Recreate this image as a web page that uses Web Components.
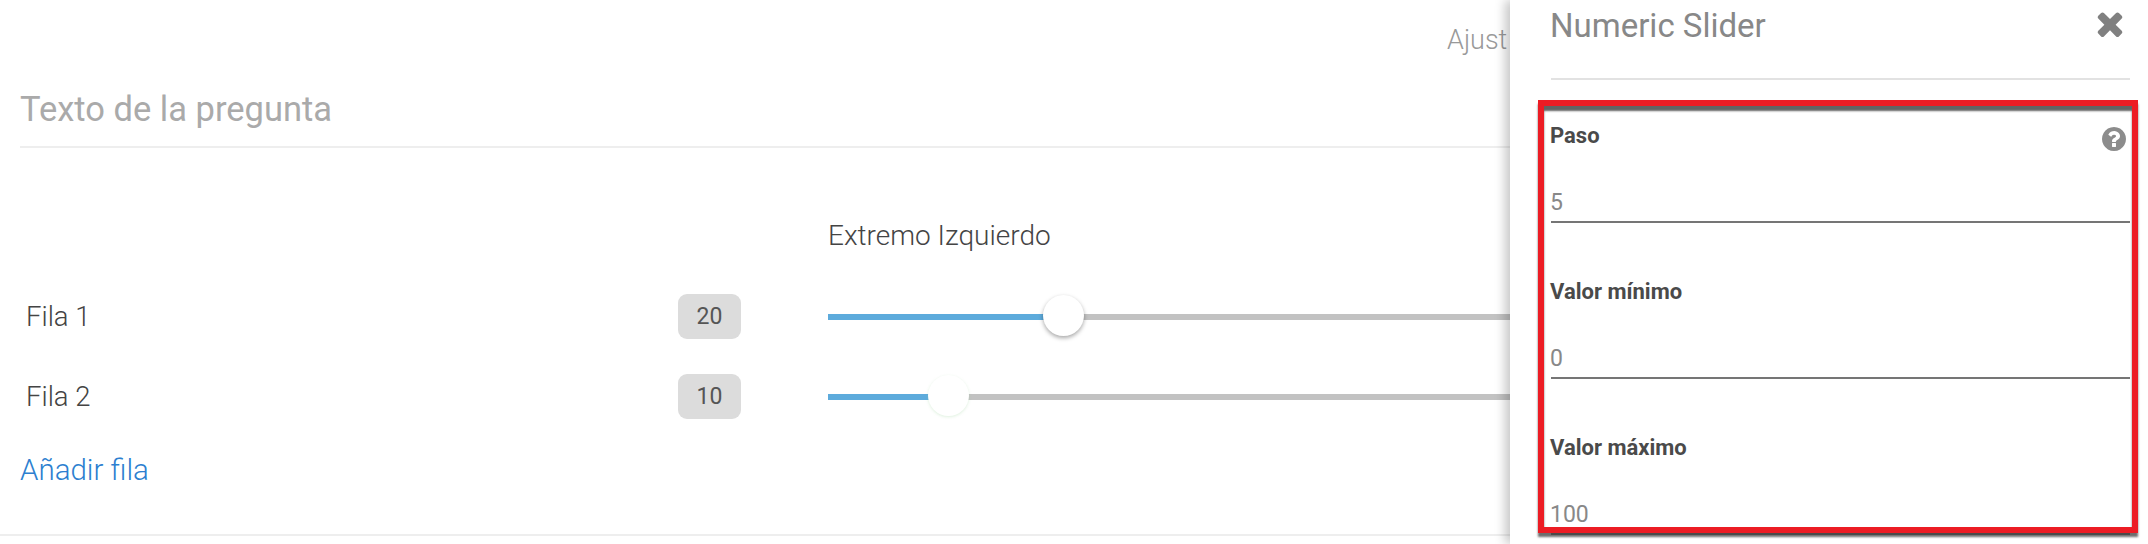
<!DOCTYPE html>
<html lang="es">
<head>
<meta charset="utf-8">
<title>Numeric Slider</title>
<style>
    html, body { margin: 0; background: #fff; }
    body { font-family: "Roboto", "Liberation Sans", sans-serif; font-weight: 300; color: #444; }
</style>
</head>
<body>
<survey-page>
    <settings-link>Ajust</settings-link>
    <question-title>Texto de la pregunta</question-title>
    <slider-head>Extremo Izquierdo</slider-head>
    <slider-row value="20" shadow="dark">Fila 1</slider-row>
    <slider-row value="10">Fila 2</slider-row>
    <add-link>Añadir fila</add-link>
    <side-panel slot="panel" heading="Numeric Slider">
        <number-field label="Paso" value="5" help></number-field>
        <number-field label="Valor mínimo" value="0"></number-field>
        <number-field label="Valor máximo" value="100"></number-field>
    </side-panel>
    <red-mark slot="panel"></red-mark>
</survey-page>

<script>
class SurveyPage extends HTMLElement {
    constructor() {
        super();
        this.attachShadow({mode: 'open'});
        this.shadowRoot.innerHTML = `
            <style>
                :host {
                    display: block;
                    position: relative;
                    width: 2148px;
                    height: 544px;
                    overflow: hidden;
                }
                #content {
                    display: flex;
                    flex-direction: column;
                    height: 534px;
                    border-bottom: 2px solid #eee;
                    box-sizing: content-box;
                }
            </style>
            <div id="content"><slot></slot></div>
            <slot name="panel"></slot>`;
    }
}

class SettingsLink extends HTMLElement {
    constructor() {
        super();
        this.attachShadow({mode: 'open'});
        this.shadowRoot.innerHTML = `
            <style>
                :host {
                    display: block;
                    height: 80px;
                    line-height: 80px;
                    padding-left: 1447px;
                    font-size: 27px;
                    color: #999;
                }
            </style>
            <slot></slot>`;
    }
}

class QuestionTitle extends HTMLElement {
    constructor() {
        super();
        this.attachShadow({mode: 'open'});
        this.shadowRoot.innerHTML = `
            <style>
                :host {
                    display: block;
                    margin-left: 20px;
                    height: 60px;
                    line-height: 59px;
                    padding-bottom: 6px;
                    border-bottom: 2px solid #eee;
                    font-size: 34.5px;
                    font-weight: 400;
                    color: #aaa;
                }
            </style>
            <slot></slot>`;
    }
}

class SliderHead extends HTMLElement {
    constructor() {
        super();
        this.attachShadow({mode: 'open'});
        this.shadowRoot.innerHTML = `
            <style>
                :host {
                    display: block;
                    margin-top: 48px;
                    height: 80px;
                    line-height: 80px;
                    padding-left: 828px;
                    font-size: 28px;
                    color: #444;
                }
            </style>
            <slot></slot>`;
    }
}

class SliderRow extends HTMLElement {
    constructor() {
        super();
        this.attachShadow({mode: 'open'});
    }

    connectedCallback() {
        const value = Number(this.getAttribute('value'));
        const dark = this.getAttribute('shadow') === 'dark';
        const left = 5 + value * 11.5;
        this.shadowRoot.innerHTML = `
            <style>
                :host {
                    display: grid;
                    grid-template-columns: 652px 63px 87px 1170px;
                    align-items: center;
                    height: 80px;
                    padding-left: 26px;
                    font-size: 27.5px;
                    color: #444;
                }
                #badge {
                    height: 45px;
                    line-height: 45px;
                    text-align: center;
                    background: #dcdcdc;
                    border-radius: 9px;
                    font-size: 23px;
                    font-weight: 400;
                    color: #555;
                }
                #track {
                    grid-column: 4;
                    position: relative;
                    height: 6px;
                    margin-top: 2px;
                    background: #c2c2c2;
                }
                #fill {
                    height: 100%;
                    width: ${left}px;
                    background: #5dabdc;
                }
                #thumb {
                    position: absolute;
                    top: -19px;
                    left: ${left - 20}px;
                    width: 41px;
                    height: 41px;
                    border-radius: 50%;
                    background: #fff;
                    box-shadow: ${dark ? '0 2px 4px rgba(0,0,0,.35)' : '0 1px 3px rgba(150,210,150,.3)'};
                }
            </style>
            <div><slot></slot></div>
            <div id="badge">${value}</div>
            <div id="track">
                <div id="fill"></div>
                <div id="thumb"></div>
            </div>`;
    }
}

class AddLink extends HTMLElement {
    constructor() {
        super();
        this.attachShadow({mode: 'open'});
        this.shadowRoot.innerHTML = `
            <style>
                :host {
                    display: block;
                    height: 68px;
                    line-height: 68px;
                    padding-left: 20px;
                    font-size: 29.5px;
                    color: #2d7fd0;
                }
            </style>
            <slot></slot>`;
    }
}

class SidePanel extends HTMLElement {
    constructor() {
        super();
        this.attachShadow({mode: 'open'});
    }

    connectedCallback() {
        this.shadowRoot.innerHTML = `
            <style>
                :host {
                    display: block;
                    position: absolute;
                    top: 0;
                    bottom: 0;
                    left: 1510px;
                    right: 0;
                    padding: 0 18px 0 41px;
                    background: #fff;
                    box-shadow: -5px 0 10px rgba(0,0,0,.22);
                    overflow: hidden;
                }
                #head {
                    display: flex;
                    justify-content: space-between;
                    align-items: flex-start;
                    height: 78px;
                    border-bottom: 2px solid #e2e2e2;
                    line-height: 51px;
                    font-size: 33px;
                    font-weight: 400;
                    color: #888;
                }
                #head span { margin-left: -1px; }
                #head svg {
                    width: 26px;
                    height: 26px;
                    margin: 11px 7px 0 0;
                    fill: #808080;
                }
                #fields { padding-top: 40px; }
            </style>
            <div id="head">
                <span>${this.getAttribute('heading')}</span>
                <svg viewBox="110 214 1188 1256"><path d="M1298 1238q0 40-28 68l-136 136q-28 28-68 28t-68-28l-294-294-294 294q-28 28-68 28t-68-28l-136-136q-28-28-28-68t28-68l294-294-294-294q-28-28-28-68t28-68l136-136q28-28 68-28t68 28l294 294 294-294q28-28 68-28t68 28l136 136q28 28 28 68t-28 68l-294 294 294 294q28 28 28 68z"/></svg>
            </div>
            <div id="fields"><slot></slot></div>`;
    }
}

class NumberField extends HTMLElement {
    constructor() {
        super();
        this.attachShadow({mode: 'open'});
    }

    connectedCallback() {
        const help = this.hasAttribute('help') ? `<svg viewBox="128 128 1536 1536"><path d="M1024 1376v-192q0-14-9-23t-23-9h-192q-14 0-23 9t-9 23v192q0 14 9 23t23 9h192q14 0 23-9t9-23zm256-672q0-88-55.5-163t-138.5-116-170-41q-243 0-371 213-15 24 8 42l132 100q7 6 19 6 16 0 25-12 53-68 86-92 34-24 86-24 48 0 85.5 26t37.5 59q0 38-20 61t-68 45q-63 28-115.5 86.5t-52.5 125.5v36q0 14 9 23t23 9h192q14 0 23-9t9-23q0-19 21.5-49.5t54.5-49.5q32-18 49-28.5t46-35 44.5-48 28-60.5 12.5-81zm384 192q0 209-103 385.5t-279.5 279.5-385.5 103-385.5-103-279.5-279.5-103-385.5 103-385.5 279.5-279.5 385.5-103 385.5 103 279.5 279.5 103 385.5z"/></svg>` : '';
        this.shadowRoot.innerHTML = `
            <style>
                :host {
                    display: block;
                    height: 156px;
                }
                #label {
                    display: flex;
                    justify-content: space-between;
                    align-items: flex-start;
                    height: 32px;
                    line-height: 32px;
                    margin-left: -1px;
                    font-size: 22px;
                    font-weight: 700;
                    color: #4a4a4a;
                }
                #label svg {
                    width: 24px;
                    height: 24px;
                    margin: 7px 4px 0 0;
                    fill: #8c8c8c;
                }
                #value {
                    margin-top: 34px;
                    height: 35px;
                    line-height: 34px;
                    border-bottom: 2px solid #757575;
                    font-size: 23px;
                    font-weight: 400;
                    color: #888;
                    text-indent: -1px;
                }
            </style>
            <div id="label"><span>${this.getAttribute('label')}</span>${help}</div>
            <div id="value">${this.getAttribute('value')}</div>`;
    }
}

// red frame drawn on top of the screenshot
class RedMark extends HTMLElement {
    constructor() {
        super();
        this.attachShadow({mode: 'open'});
        this.shadowRoot.innerHTML = `
            <style>
                :host {
                    display: block;
                    position: absolute;
                    left: 1538px;
                    top: 100px;
                    width: 600px;
                    height: 433px;
                    box-sizing: border-box;
                    border: 6px solid #ec1c24;
                    box-shadow: 0 4px 2px rgba(60,60,60,.75), inset 0 5px 2px rgba(60,60,60,.8);
                }
            </style>`;
    }
}

customElements.define('survey-page', SurveyPage);
customElements.define('settings-link', SettingsLink);
customElements.define('question-title', QuestionTitle);
customElements.define('slider-head', SliderHead);
customElements.define('slider-row', SliderRow);
customElements.define('add-link', AddLink);
customElements.define('side-panel', SidePanel);
customElements.define('number-field', NumberField);
customElements.define('red-mark', RedMark);
</script>
</body>
</html>
